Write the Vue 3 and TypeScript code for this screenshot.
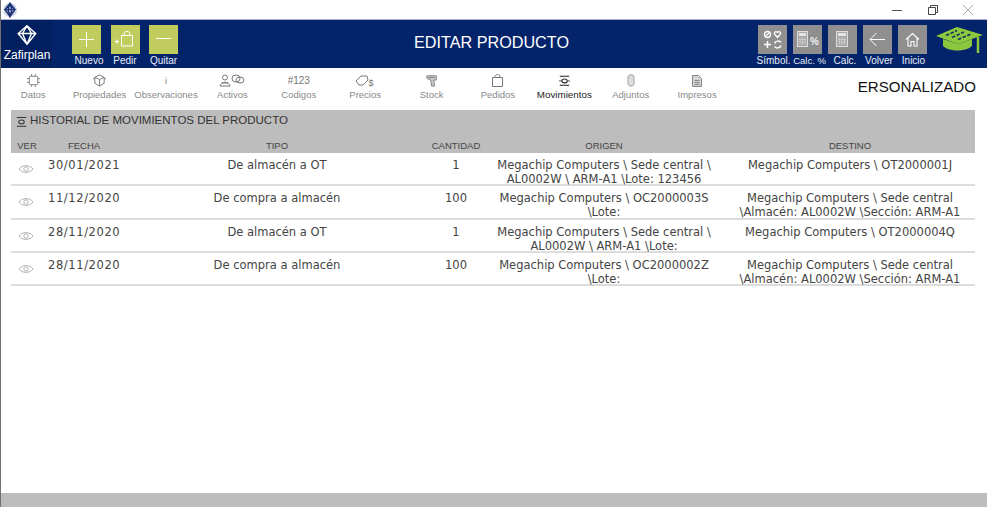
<script setup lang="ts">
interface Tab { label: string; icon: string; active?: boolean }
const tabs: Tab[] = [
  { label: 'Datos', icon: 'chip' },
  { label: 'Propiedades', icon: 'props' },
  { label: 'Observaciones', icon: 'info' },
  { label: 'Activos', icon: 'assets' },
  { label: 'Codigos', icon: 'code' },
  { label: 'Precios', icon: 'price' },
  { label: 'Stock', icon: 'stock' },
  { label: 'Pedidos', icon: 'bag' },
  { label: 'Movimientos', icon: 'move', active: true },
  { label: 'Adjuntos', icon: 'clip' },
  { label: 'Impresos', icon: 'doc' },
]
const rows = [
  { fecha: '30/01/2021', tipo: 'De almacén a OT', cantidad: '1', origen: 'Megachip Computers \\ Sede central \\ AL0002W \\ ARM-A1 \\Lote: 123456', destino: 'Megachip Computers \\ OT2000001J' },
  { fecha: '11/12/2020', tipo: 'De compra a almacén', cantidad: '100', origen: 'Megachip Computers \\ OC2000003S \\Lote:', destino: 'Megachip Computers \\ Sede central \\Almacén: AL0002W \\Sección: ARM-A1' },
  { fecha: '28/11/2020', tipo: 'De almacén a OT', cantidad: '1', origen: 'Megachip Computers \\ Sede central \\ AL0002W \\ ARM-A1 \\Lote:', destino: 'Megachip Computers \\ OT2000004Q' },
  { fecha: '28/11/2020', tipo: 'De compra a almacén', cantidad: '100', origen: 'Megachip Computers \\ OC2000002Z \\Lote:', destino: 'Megachip Computers \\ Sede central \\Almacén: AL0002W \\Sección: ARM-A1' },
]
</script>

<template>
  <div class="window">
    <div class="titlebar">
      <svg class="appicon" width="16" height="16" viewBox="0 0 16 16">
        <circle cx="8" cy="8" r="7" fill="#cfd6e8" />
        <path d="M8 1.5 13 7.5 8 14.5 3 7.5Z M3 7.5H13 M8 1.5 6 7.5 8 14.5 10 7.5Z" fill="#fff" stroke="#1c3276" stroke-width="1.5" />
      </svg>
      <div class="winctl">
        <svg width="10" height="10" viewBox="0 0 10 10"><path d="M0 5.5H10" stroke="#555" /></svg>
        <svg width="10" height="10" viewBox="0 0 10 10"><path d="M.5 2.5H7.5V9.5H.5Z M2.5 2.500V.5H9.5V7.500H7.500" fill="none" stroke="#444" /></svg>
        <svg width="10" height="10" viewBox="0 0 10 10"><path d="M0 0 10 10M10 0 0 10" stroke="#aaa" /></svg>
      </div>
    </div>

    <header class="topbar">
      <div class="logo">
        <svg width="20" height="20" viewBox="0 0 20 20">
          <path d="M10 .8 18.800 8.500 10 19.200 1.200 8.500Z M1.200 8.500H18.800 M10 .8 5.500 8.500 10 19.200 14.500 8.500Z" fill="none" stroke="#fff" stroke-width="1.400" stroke-linejoin="round" />
        </svg>
        <span>Zafirplan</span>
      </div>
      <div class="actions left">
        <div class="act">
          <div class="btn green"><svg width="29" height="29" viewBox="0 0 29 29"><path d="M14.500 7V22M7 14.500H22" stroke="#fff" stroke-width="1" /></svg></div>
          <span class="act-label nudge-5">Nuevo</span>
        </div>
        <div class="act">
          <div class="btn green"><svg width="29" height="29" viewBox="0 0 29 29"><path d="M4 16.500H8M6 14.500V18.500" stroke="#fff" stroke-width="1.200" /><path d="M10.500 10.500H21.500V21H10.500Z M13 10.500V9C13 5.500 19 5.500 19 9V10.500" fill="none" stroke="#fff" stroke-width="1" /></svg></div>
          <span class="act-label">Pedir</span>
        </div>
        <div class="act">
          <div class="btn green"><svg width="29" height="29" viewBox="0 0 29 29"><path d="M7 13.500H22" stroke="#fff" stroke-width="1" /></svg></div>
          <span class="act-label">Quitar</span>
        </div>
      </div>
      <h1 class="title">EDITAR PRODUCTO</h1>
      <div class="actions right">
        <div class="act">
          <div class="btn gray"><svg width="29" height="29" viewBox="0 0 29 29" fill="none" stroke="#fff" stroke-width="1.300"><circle cx="9.500" cy="9.500" r="3" /><path d="M7.500 11.500 11.500 7.500" /><path d="M19.500 12.500 16.500 9V7.500L18 6.500 19.500 7.500 21 6.500 22.500 7.500V9Z" /><path d="M6 19.500H13M9.500 16V23" stroke-width="1.500" /><path d="M16.500 18.500C17.500 15.500 22 15.500 23 17.500M23 20.500C22 23.500 17.500 23.500 16.500 21.500" stroke-width="1.500" /></svg></div>
          <span class="act-label nudge-2">Símbol.</span>
        </div>
        <div class="act">
          <div class="btn gray"><svg width="29" height="29" viewBox="0 0 29 29"><rect x="4.500" y="6.500" width="10" height="15" fill="#a8a8a8" stroke="#ddd" /><rect x="6" y="8" width="7" height="3" fill="#e4e4e4" /><path d="M7 12.500V20M9.500 12.500V20M12 12.500V20M6 14.500H13M6 17H13" stroke="#d4d4d4" stroke-width=".7" /><text x="17" y="20" font-size="10" font-weight="700" font-family="Liberation Sans" fill="#eee">%</text></svg></div>
          <span class="act-label nudge-4 tight">Calc. %</span>
        </div>
        <div class="act">
          <div class="btn gray"><svg width="29" height="29" viewBox="0 0 29 29"><rect x="8.500" y="6.500" width="11" height="15" fill="#a8a8a8" stroke="#ddd" /><rect x="10" y="8" width="8" height="3" fill="#e4e4e4" /><path d="M11.500 12.500V20M14 12.500V20M16.500 12.500V20M10 14.500H18M10 17H18" stroke="#d4d4d4" stroke-width=".7" /></svg></div>
          <span class="act-label nudge-5">Calc.</span>
        </div>
        <div class="act">
          <div class="btn gray"><svg width="29" height="29" viewBox="0 0 29 29"><path d="M7 14.500H22M13.500 8 7 14.500 13.500 21" fill="none" stroke="#fff" stroke-width="1" /></svg></div>
          <span class="act-label nudge-3">Volver</span>
        </div>
        <div class="act">
          <div class="btn gray"><svg width="29" height="29" viewBox="0 0 29 29"><path d="M8 14.500 14.500 8.500 21 14.500M10 13V21H13V16.500H16V21H19V13" fill="none" stroke="#fff" stroke-width="1.100" /></svg></div>
          <span class="act-label nudge-2">Inicio</span>
        </div>
        <svg class="cap" width="50" height="28" viewBox="0 0 50 28">
          <path d="M8 13V20C14 26 31 26 37 20V13L23 18Z" fill="#8cc63f" />
          <path d="M1 10 22 1 48 9 23 18Z" fill="#8fca3e" />
          <path d="M11 9.500 22 4.500M17 11.500 29 6M23 13.500 36 8" stroke="#12395a" stroke-width="1.700" stroke-dasharray="3.500 1.500" />
          <path d="M43 11V27" stroke="#8cc63f" stroke-width="2.500" />
        </svg>
      </div>
    </header>

    <nav class="tabs">
      <div class="tablist">
        <div v-for="t in tabs" :key="t.label" class="tab" :class="{ active: t.active }">
          <div class="tab-icon">
            <svg v-if="t.icon === 'chip'" width="13" height="13" viewBox="0 0 14 14" fill="none" stroke="#777"><rect x="2.500" y="2.500" width="9" height="9" rx="1" /><path d="M5 0V2M9 0V2M5 12V14M9 12V14M0 5H2M0 9H2M12 5H14M12 9H14" /></svg>
            <svg v-else-if="t.icon === 'props'" width="13" height="13" viewBox="0 0 14 14" fill="none" stroke="#777"><path d="M7 1 12 3.500V10L7 13 2 10V3.500Z M2 3.500 7 6 12 3.500M7 6V13" /><path d="M0 5H2M12 5H14" /></svg>
            <span v-else-if="t.icon === 'info'" class="glyph">i</span>
            <svg v-else-if="t.icon === 'assets'" width="28" height="13" viewBox="0 0 28 13" fill="none" stroke="#777"><circle cx="7" cy="3.500" r="2.500" /><path d="M2 12C3 7 11 7 12 12M2 12H12M4 9H10" /><ellipse cx="18" cy="4.500" rx="4" ry="3.500" /><ellipse cx="22" cy="6" rx="4" ry="3" /></svg>
            <span v-else-if="t.icon === 'code'" class="glyph code">#123</span>
            <svg v-else-if="t.icon === 'price'" width="20" height="12" viewBox="0 0 20 12" fill="none" stroke="#777"><path d="M1 6 6 1H12L13 5 8 10H4Z" /><text x="13.500" y="11" font-size="9" font-family="Liberation Sans" fill="#777" stroke="none">$</text></svg>
            <svg v-else-if="t.icon === 'stock'" width="12" height="13" viewBox="0 0 14 15" fill="#ccc" stroke="#777"><path d="M1 2H12V7H9L10 14H6.500L5.500 7 1 5Z M3 4H10" /></svg>
            <svg v-else-if="t.icon === 'bag'" width="11" height="13" viewBox="0 0 11 13" fill="none" stroke="#777"><path d="M.5 3.500H10.500V12.500H.5Z M3 3.500V2.500C3 0 8 0 8 2.500V3.500" /></svg>
            <svg v-else-if="t.icon === 'move'" width="11" height="11" viewBox="0 0 14 14" fill="none" stroke="#222" stroke-width="1.400"><ellipse cx="7" cy="7.500" rx="3.500" ry="2.500" /><path d="M1 1.500H13M1 13H13M2 7.500H.5M13.500 7.500H12" /></svg>
            <svg v-else-if="t.icon === 'clip'" width="8" height="13" viewBox="0 0 8 13" fill="#ddd" stroke="#999" stroke-width=".9"><path d="M1 3C1 0 7 0 7 3V9.500C7 13 1 13 1 9.500Z" /></svg>
            <svg v-else width="10" height="12" viewBox="0 0 10 12" fill="#d4d4d4" stroke="#888"><path d="M.5 .5H6.500L9.500 3.500V11.500H.5Z M2.500 5.500H7.500M2.500 7.500H7.500M2.500 9.500H7.500" /></svg>
          </div>
          <span>{{ t.label }}</span>
        </div>
      </div>
      <div class="custom">ERSONALIZADO</div>
    </nav>

    <section class="panel">
      <div class="panel-title">
        <svg width="11" height="11" viewBox="0 0 14 14" fill="none" stroke="#333" stroke-width="1.300"><ellipse cx="7" cy="7.500" rx="3.500" ry="2.500" /><path d="M1 2H13M1 13H13" /></svg>
        <span>HISTORIAL DE MOVIMIENTOS DEL PRODUCTO</span>
      </div>
      <div class="grid head">
        <div>VER</div><div>FECHA</div><div>TIPO</div><div>CANTIDAD</div><div>ORIGEN</div><div>DESTINO</div>
      </div>
      <div v-for="(r, i) in rows" :key="i" class="grid row">
        <div class="eye">
          <svg width="16" height="10" viewBox="0 0 16 10" fill="none" stroke="#b5b5b5"><path d="M1 5C4 .5 12 .5 15 5 12 9.500 4 9.500 1 5Z" /><circle cx="8" cy="5" r="2.200" /></svg>
        </div>
        <div class="fecha">{{ r.fecha }}</div>
        <div>{{ r.tipo }}</div>
        <div>{{ r.cantidad }}</div>
        <div>{{ r.origen }}</div>
        <div>{{ r.destino }}</div>
      </div>
    </section>

    <div class="spacer"></div>
    <footer class="bottom"></footer>
  </div>
</template>

<style>
html, body { margin: 0; background: #fff; overflow: hidden; }
</style>

<style scoped>
.window { width: 987px; height: 507px; display: flex; flex-direction: column; font-family: "Liberation Sans", Arial, sans-serif; border-left: 1px solid #707070; box-sizing: border-box; overflow: hidden; }
.titlebar { height: 20px; flex: none; box-sizing: border-box; border-bottom: 1px solid #a9b2cf; display: flex; align-items: center; justify-content: space-between; padding: 0 14px 0 1px; }
.winctl { display: flex; gap: 25.500px; }
.topbar { height: 48px; flex: none; background: #03246b; color: #fff; display: flex; position: relative; }
.logo { width: 51px; background: #02205f; display: flex; flex-direction: column; align-items: center; padding: 5px 0 0 1px; box-sizing: border-box; font-size: 12px; line-height: 15px; }
.logo span { margin-top: 3px; }
.actions { display: flex; }
.actions.left { margin-left: 20px; gap: 9.500px; }
.actions.right { position: absolute; right: 2px; top: 0; gap: 6px; align-items: flex-start; }
.act { display: flex; flex-direction: column; align-items: center; padding-top: 5px; width: 29px; }
.btn { width: 29px; height: 29px; display: flex; }
.btn.green { background: #c0cc5e; }
.btn.gray { background: #8f8f8f; }
.act-label { font-size: 10px; line-height: 12px; margin-top: 1px; white-space: nowrap; color: #e8ecf5; }
.nudge-2 { margin-left: 2px; }
.nudge-3 { margin-left: 3px; }
.nudge-4 { margin-left: 4px; }
.nudge-5 { margin-left: 5px; }
.tight { font-size: 9.500px; }
.cap { margin: 6px 0 0 2px; }
.title { position: absolute; left: 413px; top: 12px; margin: 0; font-weight: 400; font-size: 16.200px; line-height: 20px; white-space: nowrap; }
.tabs { height: 42px; flex: none; display: flex; position: relative; }
.tablist { display: flex; flex: none; width: 730px; margin-left: -1px; }
.tab { width: 66.400px; flex: none; display: flex; flex-direction: column; align-items: center; color: #888; font-size: 9.500px; padding-top: 4px; box-sizing: border-box; }
.tab.active { color: #222; font-size: 9.800px; }
.tab-icon { height: 17px; display: flex; align-items: center; justify-content: center; }
.tab > span { line-height: 12px; white-space: nowrap; }
.glyph { font-size: 9px; color: #777; }
.glyph.code { font-size: 10px; }
.custom { flex: none; margin: 0 11px 0 auto; font-size: 15.100px; color: #111; padding-top: 10px; height: 20px; line-height: 18px; white-space: nowrap; }
.panel { margin: 0 12px 0 10px; flex: none; }
.panel-title { background: #bdbdbd; height: 26px; display: flex; align-items: flex-start; gap: 3px; padding: 3px 0 0 4px; font-size: 11.500px; line-height: 15px; color: #333; box-sizing: border-box; }
.panel-title svg { margin: 3px 0 0 1px; flex: none; }
.grid { display: grid; grid-template-columns: 32px 82px 304px 54px 242px 250px; }
.head { background: #bdbdbd; height: 17px; font-size: 9.500px; color: #444; line-height: 19px; text-align: center; }
.row { height: 33.330px; box-sizing: border-box; border-bottom: 2px solid #dcdcdc; font-family: "DejaVu Sans", Verdana, sans-serif; font-size: 11.500px; line-height: 14px; color: #444; text-align: center; }
.row > div { padding-top: 5px; }
.row > .fecha { text-align: left; padding-left: 5px; white-space: nowrap; letter-spacing: .6px; }
.row > .eye { padding: 11px 2px 0 0; display: flex; justify-content: center; }
.eye svg { display: block; }
.spacer { flex: 1; }
.bottom { height: 14px; flex: none; background: #bdbdbd; }
</style>
